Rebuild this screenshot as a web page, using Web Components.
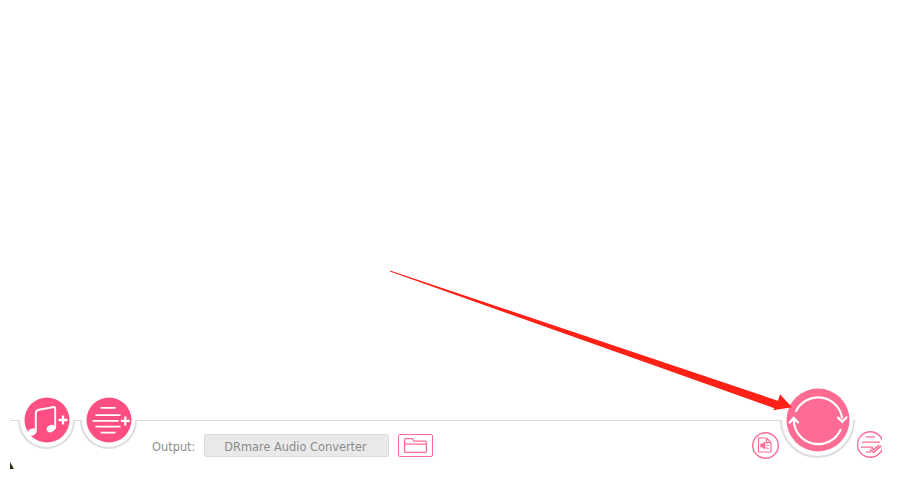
<!DOCTYPE html>
<html lang="en"><head><meta charset="utf-8"><title>DRmare Audio Converter</title>
<style>
html,body{margin:0;padding:0;background:#fff;overflow:hidden}
body{width:899px;height:483px;font-family:"DejaVu Sans",sans-serif}
</style></head><body>
<converter-app></converter-app>
<script>
class NotchButton extends HTMLElement{
  constructor(){super();const s=this.attachShadow({mode:'open'});
    s.innerHTML=`<style>
    :host{display:block;flex:none;box-sizing:border-box;width:var(--w);height:var(--h);
      border:2px solid #dedede;border-top:0;border-radius:0 0 var(--h) var(--h);position:relative}
    .disc{position:absolute;left:50%;top:0;width:var(--d);height:var(--d);transform:translate(-50%,-50%);
      border-radius:50%;background:var(--c);display:block}
    ::slotted(svg){position:absolute;inset:0;width:100%;height:100%;display:block}
    </style><div class="disc" part="disc"><slot></slot></div>`;}
}
class LineSeg extends HTMLElement{
  constructor(){super();this.attachShadow({mode:'open'}).innerHTML=`<style>
    :host{display:block;height:1px;background:#dcdcdc;flex:var(--grow,0 0 auto);width:var(--w,auto)}</style>`;}
}
class OutputField extends HTMLElement{
  constructor(){super();this.attachShadow({mode:'open'}).innerHTML=`<style>
    :host{display:flex;align-items:center;font:11.4px "DejaVu Sans",sans-serif;color:#8c8c8c}
    .lab{width:52px;flex:none;padding-top:2px}
    .box{box-sizing:border-box;width:185px;height:23px;background:#e9e9e9;border:1px solid #dcdcdc;border-radius:2px;
      display:flex;align-items:center;justify-content:center;padding:2px 2px 0 0}
    .fold{box-sizing:border-box;width:35px;height:23px;margin-left:9px;border:1px solid #fb6c95;border-radius:2px;
      display:flex;align-items:center;justify-content:center}
    </style><span class="lab">Output:</span><div class="box"><slot></slot></div>
    <div class="fold"><svg width="23" height="15" viewBox="0 0 23 15" fill="none" stroke="#fb6c95" stroke-width="1.2">
    <path d="M.6 14.4V1.6q0-1 1-1h6.4l2.2 2.6h11q1.2 0 1.2 1.2v9q0 1-1 1H1.6q-1 0-1-1zM.6 6.2h21.8"/></svg></div>`;}
}
class RoundTool extends HTMLElement{
  constructor(){super();this.attachShadow({mode:'open'}).innerHTML=`<style>
    :host{display:block;flex:none;width:var(--w,27px);height:27px;overflow:hidden}
    ::slotted(svg){display:block}</style><slot></slot>`;}
}
class ConverterApp extends HTMLElement{
  constructor(){super();const s=this.attachShadow({mode:'open'});
    s.innerHTML=`<style>
    :host{display:flex;flex-direction:column;width:899px;height:483px;position:relative;background:#fff}
    .main{height:420px;flex:none}
    .line{display:flex;align-items:flex-start;margin:0 17px 0 10px;height:63px}
    .mid{flex:1;display:flex;flex-direction:column;min-width:0}
    .lower{display:flex;align-items:flex-start;margin-top:13px;padding-left:15px}
    .sp{flex:1}
    notch-button.a{--w:57px;--h:29px;--d:45px;--c:#fd4f81}
    notch-button.b{--w:75px;--h:38px;--d:63px;--c:#fe6b93;margin-left:-1px}
    .arrow{position:absolute;left:0;top:0;width:899px;height:483px;pointer-events:none}
    .speck{position:absolute;left:10px;top:462px;width:0;height:0;border-left:4px solid #2c2c10;border-top:7px solid transparent}
    </style>
    <div class="main"></div>
    <div class="line">
      <line-seg style="--w:8px"></line-seg>
      <notch-button class="a">
        <svg viewBox="23.5 397.5 45 45" fill="none" stroke="#fff" stroke-linecap="round">
          <ellipse cx="31.2" cy="432" rx="4.4" ry="3.4" transform="rotate(-28 31.2 432)" fill="#fff" stroke="none"/>
          <ellipse cx="50" cy="428.6" rx="4.4" ry="3.4" transform="rotate(-28 50 428.6)" fill="#fff" stroke="none"/>
          <path d="M34.8 431V413q.3-2.7 3-3.2l15-2.8q1.4 0 1.4 1.5V428" stroke-width="1.9"/>
          <path d="M62 415.5v9M57.5 420h9" stroke-width="2.4" stroke-linecap="butt"/>
        </svg>
      </notch-button>
      <line-seg style="--w:5px"></line-seg>
      <notch-button class="a">
        <svg viewBox="86 397.5 45 45" fill="none" stroke="#fff" stroke-width="1.8">
          <path d="M100 407.8h15M95 415.2h25M92 420.8h26M95 426.6h25M100 432.7h15"/>
          <path d="M124.8 416.4v9M120.3 420.9h9" stroke-width="2.2"/>
        </svg>
      </notch-button>
      <div class="mid">
        <line-seg style="--grow:0 0 1px"></line-seg>
        <div class="lower">
          <output-field>DRmare Audio Converter</output-field>
          <div class="sp"></div>
          <round-tool style="margin-top:-2px;margin-right:2px">
            <svg width="27" height="27" viewBox="752.5 431.5 27 27" fill="none" stroke="#fb6c95" stroke-width="1.2">
              <circle cx="766" cy="445" r="12.8" stroke-width="1.4"/>
              <path d="M759 437.5h8l4.5 4.5v9.5h-12.5zM767 437.5v4.5h4.5"/>
              <path d="M761.5 443.5h1.8l2-1.6v6.2l-2-1.6h-1.8z" fill="#fb6c95"/>
              <path d="M767 443l2-1.5M767 445h2.4M767 447l2 1.5"/>
            </svg>
          </round-tool>
        </div>
      </div>
      <notch-button class="b">
        <svg viewBox="786 389 63 63" fill="none" stroke="#fff" stroke-linecap="round" stroke-width="2.2">
          <path d="M795.5 411.5A24.5 24.5 0 0 1 841.6 418"/>
          <path d="M837.5 418l4.2 4.3 4.2-4.3" stroke-width="2.4"/>
          <path d="M840 430.5A24.5 24.5 0 0 1 793.3 421"/>
          <path d="M789.2 423l4-4.4 4.3 4.4" stroke-width="2.4"/>
        </svg>
      </notch-button>
      <round-tool style="--w:25px;margin:11px 0 0 2px">
        <svg width="27" height="27" viewBox="857 431.5 27 27" fill="none" stroke="#fb6c95" stroke-width="1.2">
          <circle cx="870.3" cy="445" r="12.8" stroke-width="1.4"/>
          <path d="M866 437.3h9M862 442.6h18M861 447.6h12M866 452.6h5"/>
          <path d="M870 450l3.6 3 7.6-6.6M871.5 448.5l2 1.7 5.6-4.6" stroke-width="1.5"/>
        </svg>
      </round-tool>
    </div>
    <div class="speck"></div>
    <svg class="arrow" viewBox="0 0 899 483">
      <polygon fill="#ff2116" points="390,270.4 778,400.8 780,394.2 792,407.3 773,410.3 774.5,408.3 390,271.6"/>
    </svg>`;}
}
customElements.define('notch-button',NotchButton);
customElements.define('line-seg',LineSeg);
customElements.define('output-field',OutputField);
customElements.define('round-tool',RoundTool);
customElements.define('converter-app',ConverterApp);
</script>
</body></html>
